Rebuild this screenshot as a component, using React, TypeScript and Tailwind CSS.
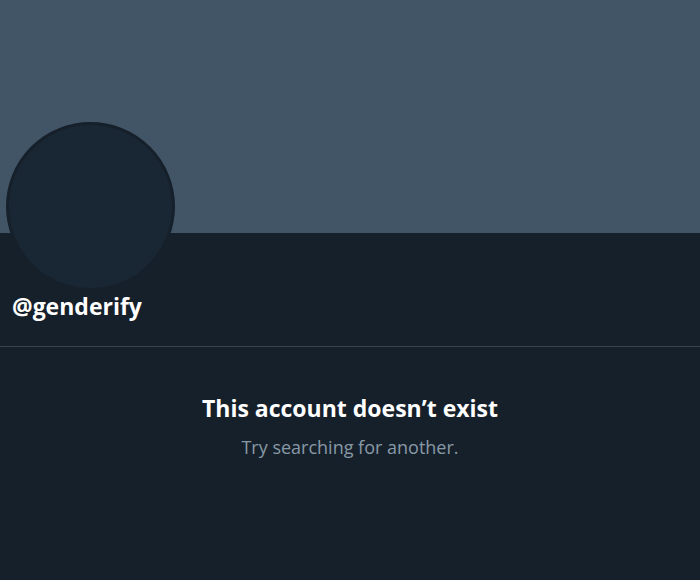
export default function App() {
  return (
    <div className="h-[580px] w-[700px] overflow-hidden bg-[#16202b] font-['Open_Sans','Noto_Sans',sans-serif]">
      <div className="h-[233px] bg-[#425566]" />
      <div className="border-b border-[#38444d] pb-[25px]">
        <div className="-mt-[111px] ml-[6px] size-[169px] rounded-full border-[3px] border-[#16202b] bg-[#192734]" />
        <p className="ml-[12px] mt-0 text-[23px] font-bold leading-[30px] text-white">@genderify</p>
      </div>
      <div className="flex flex-col items-center pt-[46px]">
        <h2 className="text-[23px] font-bold leading-[30px] text-white">This account doesn’t exist</h2>
        <p className="mt-[12px] text-[18px] leading-[24px] text-[#8899a6]">Try searching for another.</p>
      </div>
    </div>
  );
}
